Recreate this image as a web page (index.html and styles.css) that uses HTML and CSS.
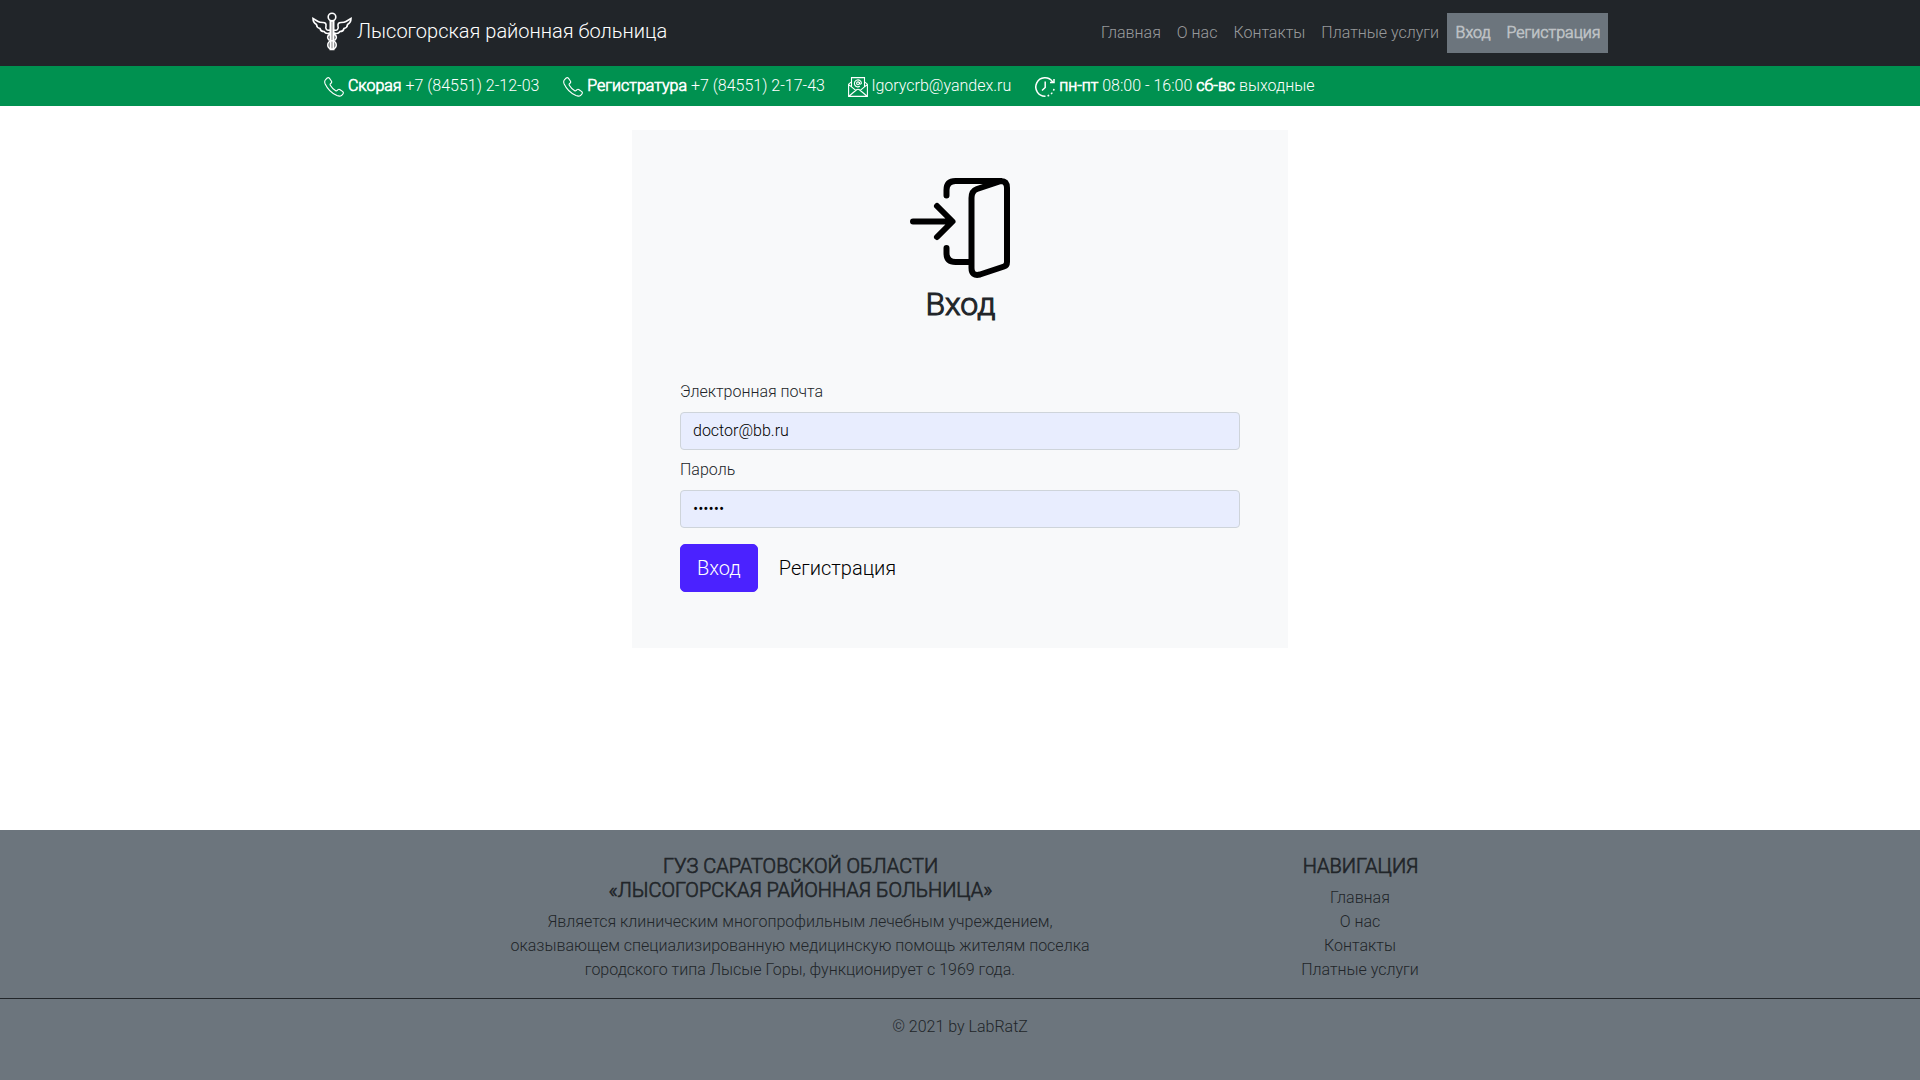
FILE: index.html
```html
<!DOCTYPE html>
<html lang="ru">
<head>
<meta charset="utf-8">
<title>Лысогорская районная больница</title>
<link rel="stylesheet" href="styles.css">
</head>
<body>
<svg class="sprite" aria-hidden="true">
  <symbol id="phone" viewBox="0 0 20 20"><path d="M1.6 2.6 3.2 1Q4.4.2 5.4 1.2L7.5 4.2Q8 5.2 7.3 6L6.3 6.9Q5.9 7.5 6.3 8.2 8.4 11.7 11.7 13.7 12.5 14.1 13 13.6L14 12.6Q14.9 12 15.7 12.5L18.8 14.6Q19.8 15.6 19 16.8L17.5 18.5Q15.8 19.7 13 18.6C8 16.4 3.4 11.8 1.2 7Q0 4.2 1.6 2.6Z"/></symbol>
</svg>
<header class="navbar">
  <div class="container navbar-inner">
    <a class="brand">
      <svg class="brand-logo" viewBox="0 0 40 40">
        <g fill="none" stroke="#fff" stroke-width="1.6">
          <circle cx="20" cy="5" r="3.8"/>
          <path d="M18.3 9v28.5h3.4V9Z" fill="#bbb"/>
          <path d="M18 18C15 19 13 17 14 14Q14.500 10.500 11 10.500 7.500 10.500 6 9.500L1 6.500Q1 10.500 4.500 12.500 4.500 15.500 8 16.500 8.500 19.500 12 19.500 14 22.500 18 21M22 18C25 19 27 17 26 14Q25.500 10.500 29 10.500 32.500 10.500 34 9.500L39 6.500Q39 10.500 35.500 12.500 35.500 15.500 32 16.500 31.500 19.500 28 19.500 26 22.500 22 21"/>
          <path d="M18 22Q13.500 25 17.500 28.500M22 22Q26.500 25 22.500 28.500"/>
          <circle cx="20" cy="33" r="4.200"/>
        </g>
      </svg>
      <span>Лысогорская районная больница</span>
    </a>
    <nav class="menu">
      <a>Главная</a><a>О нас</a><a>Контакты</a><a>Платные услуги</a>
      <div class="account"><a>Вход</a><a>Регистрация</a></div>
    </nav>
  </div>
</header>
<div class="infobar">
  <div class="container contacts">
    <span class="contact"><svg class="icon"><use href="#phone"/></svg> <b>Скорая</b> +7 (84551) 2-12-03</span>
    <span class="contact"><svg class="icon"><use href="#phone"/></svg> <b>Регистратура</b> +7 (84551) 2-17-43</span>
    <span class="contact mail"><svg class="icon" viewBox="0 0 20 20"><path d="M3.500 9.500V.6h13v8.900M3.500 4.800.6 7.200v12.200h18.800V7.200l-2.900-2.400M.8 7.600 7.800 13.400M19.200 7.600 12.200 13.400M.8 19.200 8.600 12.800Q10 11.700 11.400 12.800L19.200 19.200"/><circle cx="10" cy="6.300" r="1.400"/><path d="M11.400 4.900v1.600q1.200 1.300 2-.2A3.500 3.500 0 1 0 11.800 9.300"/></svg> lgorycrb@yandex.ru</span>
    <span class="contact"><svg class="icon clock" viewBox="0 0 20 20"><path d="M10.500 19.200A9.200 9.200 0 1 1 17.600 4.800M19 2V5.500H15M10.200 4.500V10.500L7 13.500"/><path d="M12.500 18.900A9.200 9.200 0 0 0 19.200 10" stroke-dasharray="1.800 2.200"/></svg> <b>пн-пт</b> 08:00 - 16:00 <b>сб-вс</b> выходные</span>
  </div>
</div>
<main class="content">
  <form class="card">
    <svg class="door" viewBox="0 0 100 100">
      <g fill="none" stroke="#000" stroke-width="6" stroke-linecap="round" stroke-linejoin="round">
        <path d="M36.500 17.500V12Q36.500 3 45.500 3H91Q97 3 97 10V84Q97 87.500 94 88.500L70 96.500Q61.500 98.500 61.500 90V20Q61.500 13 67 11L91 3M36.500 70V75Q36.500 84 45.500 84H61"/>
        <path d="M3 43.500H42M27 28 42.500 43.500 27 59"/>
      </g>
    </svg>
    <h2 class="title">Вход</h2>
    <label class="label" for="email">Электронная почта</label>
    <input class="field" id="email" type="email" value="doctor@bb.ru">
    <label class="label" for="password">Пароль</label>
    <input class="field" id="password" type="password" value="123456">
    <div class="actions"><button class="submit" type="button">Вход</button><a class="register">Регистрация</a></div>
  </form>
</main>
<footer class="footer">
  <div class="footer-columns">
    <section class="about">
      <h5>ГУЗ САРАТОВСКОЙ ОБЛАСТИ<br>«ЛЫСОГОРСКАЯ РАЙОННАЯ БОЛЬНИЦА»</h5>
      <p>Является клиническим многопрофильным лечебным учреждением, оказывающем специализированную медицинскую помощь жителям поселка городского типа Лысые Горы, функционирует с 1969 года.</p>
    </section>
    <section class="footer-nav">
      <h5>НАВИГАЦИЯ</h5>
      <ul><li>Главная</li><li>О нас</li><li>Контакты</li><li>Платные услуги</li></ul>
    </section>
  </div>
  <div class="copyright">© 2021 by LabRatZ</div>
</footer>
</body>
</html>
```
FILE: styles.css
```css
* { box-sizing: border-box; }
body {
  margin: 0;
  min-height: 100vh;
  display: flex;
  flex-direction: column;
  font: 300 16px/24px Roboto, sans-serif;
  color: #212529;
  background: #fff;
}
.sprite { display: none; }
.container { width: 1320px; margin: 0 auto; padding: 0 12px; }
b, h2, h5, .account { font-weight: 300; -webkit-text-stroke: 0.65px currentColor; }
.navbar { height: 66px; background: #212529; }
.navbar-inner { height: 66px; display: flex; align-items: center; justify-content: space-between; }
.brand { display: flex; align-items: center; gap: 5px; padding-bottom: 2px; font-size: 20px; line-height: 30px; color: #fff; }
.brand span { margin-top: -3px; }
.brand-logo { width: 40px; height: 40px; }
.menu { display: flex; align-items: center; color: rgba(255, 255, 255, .55); }
.menu a { padding: 8px; }
.account { display: flex; background: #6c757d; color: #bec2c5; }
.account a { padding: 8px 7.5px 8px 8.5px; }
.infobar { height: 40px; background: #009150; color: #fff; }
.contacts { display: flex; gap: 24px; padding: 8px 24px; }
.contact { white-space: nowrap; }
.mail { margin-left: -1px; }
.icon { width: 20px; height: 20px; vertical-align: middle; fill: none; stroke: #fff; stroke-width: 1.1; }
.clock { stroke-width: 1.5; }
.content { flex: 1; padding-top: 24px; }
.card { width: 656px; height: 518px; margin: 0 auto; padding: 48px; display: flex; flex-direction: column; background: #f8f9fa; }
.door { width: 100px; height: 100px; align-self: center; }
.title { margin: 7px 0 57px; padding-left: 1px; font-size: 32px; line-height: 38px; text-align: center; -webkit-text-stroke-width: 1.1px; }
.label { margin-bottom: 8px; }
.field { height: 38px; margin: 0 0 8px; padding: 5px 12px 7px; border: 1px solid #ced4da; border-radius: 4px; background: #e8edfe; font: inherit; color: #000; }
.actions { display: flex; align-items: center; margin-top: 8px; font-size: 20px; line-height: 30px; color: #000; }
.submit { height: 48px; padding: 8px 16px; border: 1px solid #4b22ff; border-radius: 5px; background: #4b22ff; color: #fff; font: inherit; }
.register { margin-left: 21px; }
.footer { height: 250px; background: #6c757d; text-align: center; }
.footer-columns { height: 169px; display: flex; padding: 24px 0 0 480px; border-bottom: 1px solid #212529; }
.about { width: 640px; padding: 0 24px; }
.footer-nav { width: 480px; }
.footer h5 { margin: 0 0 8px; padding-left: 1px; font-size: 20px; line-height: 24px; }
.footer p, .footer ul { margin: 0; padding: 0; list-style: none; }
.copyright { padding-top: 16px; }
```
